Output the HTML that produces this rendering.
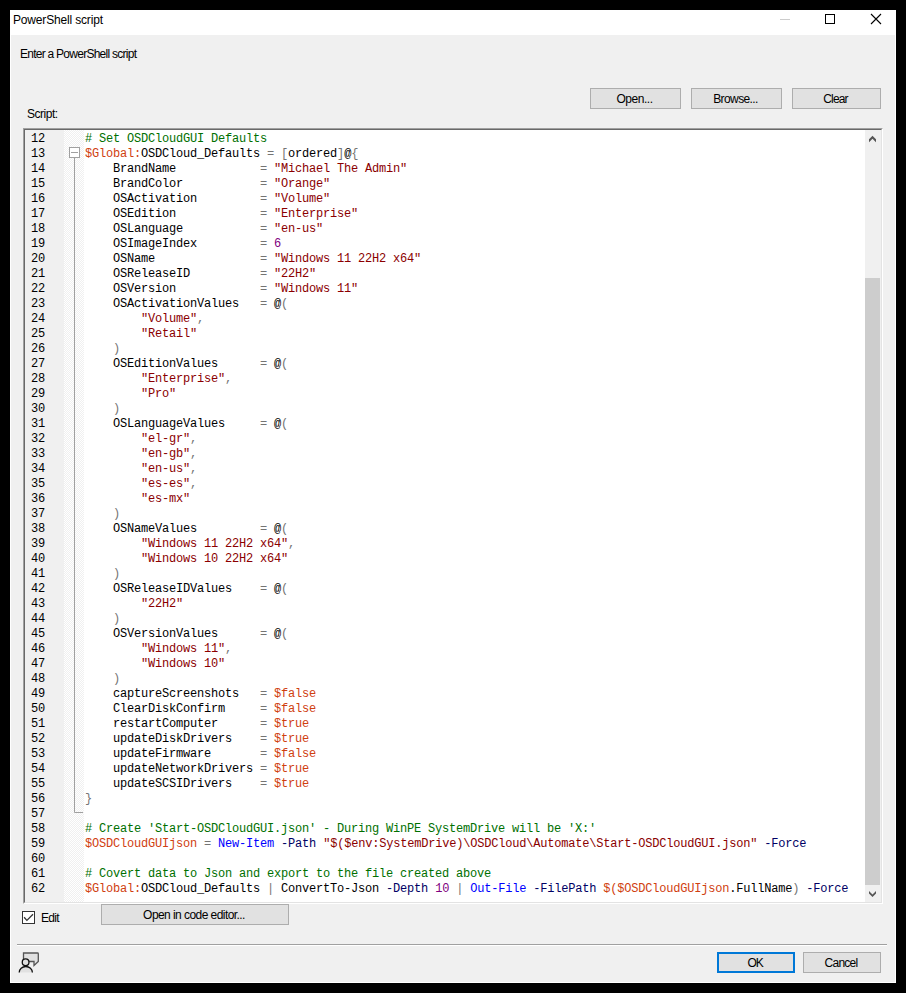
<!DOCTYPE html>
<html><head><meta charset="utf-8"><title>PowerShell script</title>
<style>
*{margin:0;padding:0;box-sizing:border-box}
html,body{width:906px;height:993px;overflow:hidden;background:#000}
body{position:relative;font-family:"Liberation Sans",sans-serif;font-size:12px;color:#000}
.a{position:absolute}
#win{left:10px;top:10px;width:886px;height:973px;background:#fff}
#client{left:11px;top:35px;width:884px;height:947px;background:#f0f0f0}
.lbl{white-space:pre;line-height:14px}
#title{left:13px;top:13px;letter-spacing:-0.17px}
.btn{background:#e1e1e1;border:1px solid #adadad;text-align:center;line-height:21px;white-space:pre;padding-right:2px}
.btn.def{border:2px solid #0078d7;line-height:19px}
#ed{left:23px;top:128px;width:860px;height:776px;border-style:solid;border-width:2px;border-color:#a0a0a0 #fff #fff #a0a0a0;background:#fff}
#ed::before{content:"";position:absolute;left:-1px;top:-1px;right:-1px;bottom:-1px;border-style:solid;border-width:1px;border-color:#696969 #e3e3e3 #e3e3e3 #696969}
#nums{left:25px;top:130px;width:39px;height:772px;background:#f0f0f0;overflow:hidden}
#fold{left:64px;top:130px;width:20px;height:772px;overflow:hidden;
 background-color:#fff;
 background-image:linear-gradient(45deg,#f0f0f0 25%,transparent 25%,transparent 75%,#f0f0f0 75%),linear-gradient(45deg,#f0f0f0 25%,transparent 25%,transparent 75%,#f0f0f0 75%);
 background-size:2px 2px;background-position:0 0,1px 1px}
.mono{font-family:"Liberation Mono",monospace;font-size:12px;line-height:15px;letter-spacing:-0.2px;white-space:pre}
#numtxt{left:31px;top:132px}
#code{left:85px;top:132px}
#clip{left:25px;top:130px;width:840px;height:772px;overflow:hidden}
.c{color:#007000}.s{color:#8b0000}.v{color:#d04010}.n{color:#800080}.o{color:#747474}.m{color:#0000ff}.p{color:#000064}
#sb{left:865px;top:130px;width:16px;height:772px;background:#f0f0f0}
#thumb{left:865px;top:278px;width:15px;height:607px;background:#cdcdcd}
</style></head><body>
<div id="win" class="a"></div>
<div id="client" class="a"></div>
<div id="title" class="a lbl">PowerShell script</div>
<svg class="a" style="left:0;top:0" width="906" height="40">
 <line x1="780" y1="19.5" x2="790" y2="19.5" stroke="#cccccc" stroke-width="1"/>
 <rect x="825.5" y="14.5" width="9" height="9" fill="none" stroke="#000" stroke-width="1"/>
 <path d="M871 14 L881 24 M881 14 L871 24" stroke="#000" stroke-width="1.1"/>
</svg>
<div class="a lbl" style="left:20px;top:47px;letter-spacing:-0.74px">Enter a PowerShell script</div>
<div class="a btn" style="left:590px;top:88px;width:91px;height:21px;letter-spacing:-0.48px">Open...</div>
<div class="a btn" style="left:691px;top:88px;width:91px;height:21px;letter-spacing:-0.6px">Browse...</div>
<div class="a btn" style="left:792px;top:88px;width:89px;height:21px;letter-spacing:-0.85px">Clear</div>
<div class="a lbl" style="left:27px;top:107px;letter-spacing:-0.48px">Script:</div>

<div id="ed" class="a"></div>
<div id="clip" class="a"></div>
<div id="nums" class="a"></div>
<div id="fold" class="a"></div>
<div id="numtxt" class="a mono"><div>12</div><div>13</div><div>14</div><div>15</div><div>16</div><div>17</div><div>18</div><div>19</div><div>20</div><div>21</div><div>22</div><div>23</div><div>24</div><div>25</div><div>26</div><div>27</div><div>28</div><div>29</div><div>30</div><div>31</div><div>32</div><div>33</div><div>34</div><div>35</div><div>36</div><div>37</div><div>38</div><div>39</div><div>40</div><div>41</div><div>42</div><div>43</div><div>44</div><div>45</div><div>46</div><div>47</div><div>48</div><div>49</div><div>50</div><div>51</div><div>52</div><div>53</div><div>54</div><div>55</div><div>56</div><div>57</div><div>58</div><div>59</div><div>60</div><div>61</div><div>62</div></div>
<div id="code" class="a mono"><div><span class="c"># Set OSDCloudGUI Defaults</span></div><div><span class="v">$Global:</span>OSDCloud_Defaults <span class="o">=</span> <span class="o">[</span>ordered<span class="o">]</span>@<span class="o">{</span></div><div>    BrandName            <span class="o">=</span> <span class="s">&quot;Michael The Admin&quot;</span></div><div>    BrandColor           <span class="o">=</span> <span class="s">&quot;Orange&quot;</span></div><div>    OSActivation         <span class="o">=</span> <span class="s">&quot;Volume&quot;</span></div><div>    OSEdition            <span class="o">=</span> <span class="s">&quot;Enterprise&quot;</span></div><div>    OSLanguage           <span class="o">=</span> <span class="s">&quot;en-us&quot;</span></div><div>    OSImageIndex         <span class="o">=</span> <span class="n">6</span></div><div>    OSName               <span class="o">=</span> <span class="s">&quot;Windows 11 22H2 x64&quot;</span></div><div>    OSReleaseID          <span class="o">=</span> <span class="s">&quot;22H2&quot;</span></div><div>    OSVersion            <span class="o">=</span> <span class="s">&quot;Windows 11&quot;</span></div><div>    OSActivationValues   <span class="o">=</span> @<span class="o">(</span></div><div>        <span class="s">&quot;Volume&quot;</span><span class="o">,</span></div><div>        <span class="s">&quot;Retail&quot;</span></div><div>    <span class="o">)</span></div><div>    OSEditionValues      <span class="o">=</span> @<span class="o">(</span></div><div>        <span class="s">&quot;Enterprise&quot;</span><span class="o">,</span></div><div>        <span class="s">&quot;Pro&quot;</span></div><div>    <span class="o">)</span></div><div>    OSLanguageValues     <span class="o">=</span> @<span class="o">(</span></div><div>        <span class="s">&quot;el-gr&quot;</span><span class="o">,</span></div><div>        <span class="s">&quot;en-gb&quot;</span><span class="o">,</span></div><div>        <span class="s">&quot;en-us&quot;</span><span class="o">,</span></div><div>        <span class="s">&quot;es-es&quot;</span><span class="o">,</span></div><div>        <span class="s">&quot;es-mx&quot;</span></div><div>    <span class="o">)</span></div><div>    OSNameValues         <span class="o">=</span> @<span class="o">(</span></div><div>        <span class="s">&quot;Windows 11 22H2 x64&quot;</span><span class="o">,</span></div><div>        <span class="s">&quot;Windows 10 22H2 x64&quot;</span></div><div>    <span class="o">)</span></div><div>    OSReleaseIDValues    <span class="o">=</span> @<span class="o">(</span></div><div>        <span class="s">&quot;22H2&quot;</span></div><div>    <span class="o">)</span></div><div>    OSVersionValues      <span class="o">=</span> @<span class="o">(</span></div><div>        <span class="s">&quot;Windows 11&quot;</span><span class="o">,</span></div><div>        <span class="s">&quot;Windows 10&quot;</span></div><div>    <span class="o">)</span></div><div>    captureScreenshots   <span class="o">=</span> <span class="v">$false</span></div><div>    ClearDiskConfirm     <span class="o">=</span> <span class="v">$false</span></div><div>    restartComputer      <span class="o">=</span> <span class="v">$true</span></div><div>    updateDiskDrivers    <span class="o">=</span> <span class="v">$true</span></div><div>    updateFirmware       <span class="o">=</span> <span class="v">$false</span></div><div>    updateNetworkDrivers <span class="o">=</span> <span class="v">$true</span></div><div>    updateSCSIDrivers    <span class="o">=</span> <span class="v">$true</span></div><div><span class="o">}</span></div><div> </div><div><span class="c"># Create &#x27;Start-OSDCloudGUI.json&#x27; - During WinPE SystemDrive will be &#x27;X:&#x27;</span></div><div><span class="v">$OSDCloudGUIjson</span> <span class="o">=</span> <span class="m">New-Item</span> <span class="p">-Path</span> <span class="s">&quot;$($env:SystemDrive)\OSDCloud\Automate\Start-OSDCloudGUI.json&quot;</span> <span class="p">-Force</span></div><div> </div><div><span class="c"># Covert data to Json and export to the file created above</span></div><div><span class="v">$Global:</span>OSDCloud_Defaults <span class="o">|</span> ConvertTo-Json <span class="p">-Depth</span> <span class="n">10</span> <span class="o">|</span> <span class="m">Out-File</span> <span class="p">-FilePath</span> <span class="v">$($OSDCloudGUIjson</span>.FullName<span class="o">)</span> <span class="p">-Force</span></div></div>
<svg class="a" style="left:64px;top:130px" width="20" height="772">
 <rect x="5.5" y="17.5" width="10" height="10" fill="#fff" stroke="#a0a0a0" stroke-width="1"/>
 <line x1="7" y1="22.5" x2="14" y2="22.5" stroke="#a0a0a0" stroke-width="1"/>
 <path d="M10.5 28 V682.5 H19" fill="none" stroke="#a0a0a0" stroke-width="1"/>
</svg>
<div id="sb" class="a"></div>
<div id="thumb" class="a"></div>
<svg class="a" style="left:865px;top:130px" width="16" height="772">
 <path d="M4 12.3 L7.5 8.8 L11 12.3 V9.3 L7.5 5.8 L4 9.3 Z" fill="#555"/>
 <path d="M4 761 L7.5 764.5 L11 761 V763.4 L7.5 766.9 L4 763.4 Z" fill="#555"/>
</svg>

<svg class="a" style="left:22px;top:911px" width="13" height="13">
 <rect x="0.5" y="0.5" width="12" height="12" fill="#fff" stroke="#333" stroke-width="1"/>
 <path d="M2.1 6.3 L4.9 9.4 L11 3.2" fill="none" stroke="#333" stroke-width="1.3"/>
</svg>
<div class="a lbl" style="left:41px;top:911px;letter-spacing:-0.7px">Edit</div>
<div class="a btn" style="left:101px;top:904px;width:188px;height:21px;letter-spacing:-0.56px">Open in code editor...</div>

<div class="a" style="left:17px;top:944px;width:870px;height:1px;background:#a0a0a0"></div>
<div class="a" style="left:17px;top:945px;width:870px;height:1px;background:#fff"></div>
<svg class="a" style="left:14px;top:948px" width="30" height="30">
 <path d="M9.5 13.5 V5 H23.5 Q24.3 5 24.3 5.8 V13.5 L20 17.5 V13.5 H15" fill="#e1e1e1" stroke="#555" stroke-width="1.3"/>
 <path d="M5.2 24.5 A6.6 6 0 0 1 18.4 24.5 Z" fill="#e1e1e1" stroke="none"/>
 <path d="M5.2 24.5 A6.6 6 0 0 1 18.4 24.5" fill="none" stroke="#111" stroke-width="1.3"/>
 <circle cx="11.6" cy="14.3" r="3.35" fill="#e1e1e1" stroke="#111" stroke-width="1.3"/>
</svg>
<div class="a btn def" style="left:717px;top:952px;width:78px;height:21px;letter-spacing:-1.2px">OK</div>
<div class="a btn" style="left:803px;top:952px;width:78px;height:21px;letter-spacing:-0.74px">Cancel</div>
</body></html>
